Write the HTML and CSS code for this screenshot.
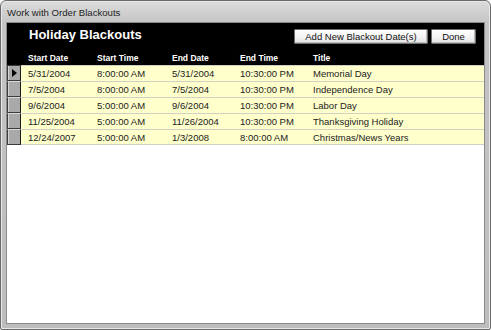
FILE: index.html
```html
<!DOCTYPE html>
<html lang="en">
<head>
    <meta charset="UTF-8">
    <title>Work with Order Blackouts</title>
    <link rel="stylesheet" href="styles.css">
</head>
<body>
    <div class="window">
        <div class="titlebar">Work with Order Blackouts</div>
        <div class="client">
            <div class="header">
                <div class="header-top">
                    <h1>Holiday Blackouts</h1>
                    <div class="buttons">
                        <button class="btn btn-add">Add New Blackout Date(s)</button>
                        <button class="btn btn-done">Done</button>
                    </div>
                </div>
                <div class="grid cols">
                    <span></span>
                    <span>Start Date</span>
                    <span>Start Time</span>
                    <span>End Date</span>
                    <span>End Time</span>
                    <span>Title</span>
                </div>
            </div>

            <div class="rows">
                <div class="grid row current">
                    <span class="selector"><span class="arrow"></span></span>
                    <span>5/31/2004</span>
                    <span>8:00:00 AM</span>
                    <span>5/31/2004</span>
                    <span>10:30:00 PM</span>
                    <span>Memorial Day</span>
                </div>
                <div class="grid row">
                    <span class="selector"></span>
                    <span>7/5/2004</span>
                    <span>8:00:00 AM</span>
                    <span>7/5/2004</span>
                    <span>10:30:00 PM</span>
                    <span>Independence Day</span>
                </div>
                <div class="grid row">
                    <span class="selector"></span>
                    <span>9/6/2004</span>
                    <span>5:00:00 AM</span>
                    <span>9/6/2004</span>
                    <span>10:30:00 PM</span>
                    <span>Labor Day</span>
                </div>
                <div class="grid row">
                    <span class="selector"></span>
                    <span>11/25/2004</span>
                    <span>5:00:00 AM</span>
                    <span>11/26/2004</span>
                    <span>10:30:00 PM</span>
                    <span>Thanksgiving Holiday</span>
                </div>
                <div class="grid row">
                    <span class="selector"></span>
                    <span>12/24/2007</span>
                    <span>5:00:00 AM</span>
                    <span>1/3/2008</span>
                    <span>8:00:00 AM</span>
                    <span>Christmas/News Years</span>
                </div>
            </div>
        </div>
    </div>
</body>
</html>
```

FILE: styles.css
```css
* {
    box-sizing: border-box;
    font-family: "Liberation Sans", Arial, sans-serif;
}

html, body {
    margin: 0;
    padding: 0;
    background: #fff;
}

.window {
    width: 491px;
    height: 330px;
    display: flex;
    flex-direction: column;
    border: 1px solid #6b6b6b;
    border-radius: 6px 6px 2px 2px;
    background: linear-gradient(to bottom, #dcdcdc 0, #c4c4c4 22px, #bdbdbd 100%);
    padding: 0 5px 5px 5px;
    box-shadow: inset 0 0 0 1px #e8e8e8;
}

.titlebar {
    height: 21px;
    line-height: 23px;
    padding-left: 1px;
    font-size: 9.6px;
    color: #1e1e1e;
    flex-shrink: 0;
}

.client {
    flex: 1;
    background: #fff;
    border: 1px solid #8a8a8a;
    display: flex;
    flex-direction: column;
}

.header {
    background: #000;
    height: 42px;
    display: flex;
    flex-direction: column;
}

.header-top {
    display: flex;
    justify-content: space-between;
    align-items: flex-start;
    height: 27px;
}

.header-top h1 {
    margin: 0;
    padding: 4px 0 0 22px;
    color: #fff;
    font-size: 13px;
    font-weight: bold;
    line-height: 16px;
}

.buttons {
    display: flex;
    gap: 3px;
    padding: 6px 8px 0 0;
}

.btn {
    height: 15px;
    padding: 0;
    font-size: 9.5px;
    color: #111;
    background: linear-gradient(to bottom, #ffffff 0, #f2f2f2 60%, #e2e2e2 100%);
    border: 1px solid #707070;
    border-radius: 1px;
    box-shadow: inset -1px -1px 0 #bbb;
    line-height: 13px;
}

.btn-add {
    width: 134px;
}

.btn-done {
    width: 45px;
}

.grid {
    display: grid;
    grid-template-columns: 14px 69px 75px 68px 73px 1fr;
    align-items: center;
}

.grid span {
    padding-left: 7px;
    white-space: nowrap;
}

.grid .selector {
    padding-left: 0;
}

.cols {
    color: #fff;
    font-size: 8.5px;
    font-weight: bold;
    height: 15px;
}

.row {
    height: 16px;
    font-size: 9.5px;
    color: #222;
    background: #ffffcc;
    border-top: 1px solid #d0d0c4;
}

.row:last-child {
    border-bottom: 1px solid #d0d0c4;
}

.selector {
    height: 16px;
    margin-top: -1px;
    background: #a9a9a9;
    border: 1px solid #3c3c3c;
    border-top-color: #d8d8d8;
    border-right-color: #1c1c1c;
    box-shadow: inset 1px 0 0 #d4d4d4;
    display: flex;
    align-items: center;
    justify-content: center;
}

.row:first-child .selector {
    border-top-color: #3c3c3c;
}

.arrow {
    width: 0;
    height: 0;
    padding: 0 !important;
    border-top: 4px solid transparent;
    border-bottom: 4px solid transparent;
    border-left: 5px solid #000;
}
```
